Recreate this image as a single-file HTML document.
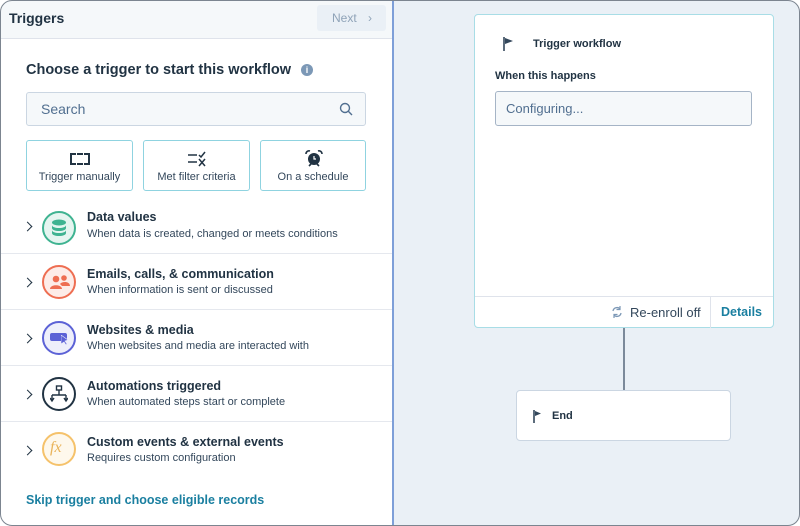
<!DOCTYPE html>
<html><head><style>
*{box-sizing:border-box;margin:0;padding:0}
body{width:800px;height:526px;background:#fff;font-family:"Liberation Sans",sans-serif;color:#33475b;position:relative;overflow:hidden}
.frame{position:absolute;left:0;top:0;width:800px;height:526px;border-radius:12px;overflow:hidden;background:#eaf0f6}
.border{position:absolute;left:0;top:0;width:800px;height:526px;border:1px solid #7c8590;border-radius:12px}
.left{position:absolute;left:0;top:0;width:394px;height:526px;background:#fff;border-right:2px solid #7e9fd8}
.hdr{position:absolute;left:0;top:0;width:392px;height:39px;background:#f5f8fa;border-bottom:1px solid #dfe3eb}
.abs{position:absolute}
.btn{position:absolute;top:140px;height:51px;border:1px solid #8fd3e0;border-radius:3px;font-size:11px;color:#33475b;text-align:center}
.btn span{position:absolute;left:0;right:0;top:30px}
.row{position:absolute;left:0;width:392px;height:56px;border-bottom:1px solid #e5e8ee}
.circ{position:absolute;left:42px;width:34px;height:34px;border-radius:50%;border:2px solid}
.rt{position:absolute;left:87px;font-size:12.5px;font-weight:bold;color:#213343}
.rs{position:absolute;left:87px;font-size:11px;color:#33475b}
.chev{position:absolute;left:24px;width:7px;height:7px;border-right:1.6px solid #213343;border-top:1.6px solid #213343;transform:rotate(45deg)}
</style></head><body>
<div class="frame">
<div class="left">
 <div class="hdr">
  <div class="abs" style="left:9px;top:10px;font-size:14px;font-weight:bold;color:#213343">Triggers</div>
  <div class="abs" style="left:317px;top:5px;width:69px;height:26px;background:#eaf0f6;border-radius:3px;font-size:12px;color:#8fa3b8;padding:6px 0 0 15px">Next <span style="margin-left:8px">›</span></div>
 </div>
 <div class="abs" style="left:26px;top:62px;font-size:14.5px;font-weight:bold;color:#213343">Choose a trigger to start this workflow</div>
 <div class="abs" style="left:301px;top:64px;width:12px;height:12px;border-radius:50%;background:#7c98b6;color:#fff;font-size:9px;font-weight:bold;text-align:center;line-height:12px">i</div>
 <div class="abs" style="left:26px;top:92px;width:340px;height:34px;background:#f5f8fa;border:1px solid #cbd6e2;border-radius:3px">
  <div class="abs" style="left:14px;top:8px;font-size:14px;color:#516f90">Search</div>
  <svg class="abs" style="left:312px;top:9px" width="14" height="14" viewBox="0 0 14 14"><circle cx="6" cy="6" r="4.5" fill="none" stroke="#516f90" stroke-width="1.4"/><path d="M9.3 9.3L13 13" stroke="#516f90" stroke-width="1.4"/></svg>
 </div>
 <div class="btn" style="left:26px;width:107px"><div class="abs" style="left:43px;top:12px;width:20px;height:12px;border:2px dashed #213343"></div><span>Trigger manually</span></div>
 <div class="btn" style="left:143px;width:107px"><svg class="abs" style="left:43px;top:10px" width="20" height="16" viewBox="0 0 20 16"><path d="M1 4h9M1 11h9" stroke="#213343" stroke-width="1.6"/><path d="M12 4l2 2 4-5M12 8l6 7M18 8l-6 7" stroke="#213343" stroke-width="1.5" fill="none"/></svg><span>Met filter criteria</span></div>
 <div class="btn" style="left:260px;width:106px"><svg class="abs" style="left:43px;top:9px" width="20" height="18" viewBox="0 0 20 18"><circle cx="10" cy="9" r="6" fill="#213343"/><path d="M10 6v3h2" stroke="#fff" stroke-width="1.2" fill="none"/><path d="M2 4a3 3 0 0 1 4-3M18 4a3 3 0 0 0-4-3M5 16l2-2M15 16l-2-2" stroke="#213343" stroke-width="1.6" fill="none"/></svg><span>On a schedule</span></div>

 <div class="row" style="top:198px"><div class="chev" style="top:25px"></div><div class="circ" style="top:13px;border-color:#3fb391;background:#e5f5f0"><svg class="abs" style="left:7px;top:6px" width="16" height="18" viewBox="0 0 16 18"><ellipse cx="8" cy="3.5" rx="7" ry="3" fill="#3fb391"/><path d="M1 6c0 4 14 4 14 0v3c0 4-14 4-14 0zM1 11c0 4 14 4 14 0v3c0 4-14 4-14 0z" fill="#3fb391"/></svg></div><div class="rt" style="top:12px">Data values</div><div class="rs" style="top:30px">When data is created, changed or meets conditions</div></div>
 <div class="row" style="top:254px"><div class="chev" style="top:25px"></div><div class="circ" style="top:11px;border-color:#ee6e52;background:#fdece8"><svg class="abs" style="left:6px;top:7px" width="20" height="16" viewBox="0 0 20 16"><circle cx="6" cy="5" r="3.3" fill="#ee6e52"/><circle cx="14" cy="4" r="2.8" fill="#ee6e52"/><path d="M0 15c0-5 12-5 12 0zM10 10c2-3 10-3 10 2h-8z" fill="#ee6e52"/></svg></div><div class="rt" style="top:13px">Emails, calls, &amp; communication</div><div class="rs" style="top:30px">When information is sent or discussed</div></div>
 <div class="row" style="top:310px"><div class="chev" style="top:25px"></div><div class="circ" style="top:11px;border-color:#5c62d6;background:#eeeffb"><div class="abs" style="left:6px;top:10px;width:17px;height:8px;background:#5c62d6;border-radius:2px"></div><svg class="abs" style="left:17px;top:12px" width="8" height="10" viewBox="0 0 8 10"><path d="M0 0l7 5-3 1 2 3-1 1-2-3-3 2z" fill="#5c62d6" stroke="#eeeffb" stroke-width=".6"/></svg></div><div class="rt" style="top:13px">Websites &amp; media</div><div class="rs" style="top:30px">When websites and media are interacted with</div></div>
 <div class="row" style="top:366px"><div class="chev" style="top:25px"></div><div class="circ" style="top:11px;border-color:#213343;background:#fff"><svg class="abs" style="left:6px;top:6px" width="18" height="18" viewBox="0 0 18 18"><rect x="6.5" y="1" width="5" height="4" fill="none" stroke="#213343" stroke-width="1.4"/><path d="M9 5v5M2 10h14M2 10v5M16 10v5M0 13l2 3 2-3M14 13l2 3 2-3" stroke="#213343" stroke-width="1.4" fill="none"/></svg></div><div class="rt" style="top:13px">Automations triggered</div><div class="rs" style="top:30px">When automated steps start or complete</div></div>
 <div class="row" style="top:422px;border-bottom:none"><div class="chev" style="top:25px"></div><div class="circ" style="top:10px;border-color:#f5c26b;background:#fef8ec"><div class="abs" style="left:6px;top:5px;font-family:'Liberation Serif',serif;font-style:italic;font-size:16px;color:#e9b359">fx</div></div><div class="rt" style="top:13px">Custom events &amp; external events</div><div class="rs" style="top:30px">Requires custom configuration</div></div>
 <div class="abs" style="left:26px;top:493px;font-size:12.5px;font-weight:bold;color:#1a7fa0">Skip trigger and choose eligible records</div>
</div>

<div class="abs" style="left:474px;top:14px;width:300px;height:314px;background:#fff;border:1px solid #a8dde6;border-radius:4px">
 <svg class="abs" style="left:28px;top:22px" width="12" height="14" viewBox="0 0 12 14"><path d="M1 0v14" stroke="#33475b" stroke-width="1.6"/><path d="M2 1l8 3-8 3z" fill="#33475b"/></svg>
 <div class="abs" style="left:58px;top:23px;font-size:11px;font-weight:bold;color:#213343">Trigger workflow</div>
 <div class="abs" style="left:20px;top:55px;font-size:11px;font-weight:bold;color:#213343">When this happens</div>
 <div class="abs" style="left:20px;top:76px;width:257px;height:35px;background:#f5f8fa;border:1px solid #a5b4c6;border-radius:3px;font-size:13px;color:#516f90;padding:9px 0 0 10px">Configuring...</div>
 <div class="abs" style="left:0;top:281px;width:298px;height:1px;background:#dfe3eb"></div>
 <div class="abs" style="left:235px;top:282px;width:1px;height:31px;background:#dfe3eb"></div>
 <svg class="abs" style="left:136px;top:291px" width="12" height="12" viewBox="0 0 12 12"><path d="M2 5a4 4 0 0 1 7-2M10 7a4 4 0 0 1-7 2" stroke="#7c98b6" stroke-width="1.3" fill="none"/><path d="M9 0v3.5H5.5M3 12V8.5h3.5" stroke="#7c98b6" stroke-width="1.2" fill="none"/></svg>
 <div class="abs" style="left:155px;top:290px;font-size:13px;color:#33475b">Re-enroll off</div>
 <div class="abs" style="left:246px;top:290px;font-size:12.5px;font-weight:bold;color:#1a7fa0">Details</div>
</div>
<div class="abs" style="left:623px;top:328px;width:2px;height:62px;background:#7c8a9a"></div>
<div class="abs" style="left:516px;top:390px;width:215px;height:51px;background:#fff;border:1px solid #cbd6e2;border-radius:4px">
 <svg class="abs" style="left:16px;top:19px" width="10" height="13" viewBox="0 0 10 13"><path d="M1 0v13" stroke="#33475b" stroke-width="1.6"/><path d="M2 1l6 2.5-6 2.5z" fill="#33475b"/></svg>
 <div class="abs" style="left:35px;top:19px;font-size:11px;font-weight:bold;color:#213343">End</div>
</div>
</div>
<div class="border"></div>
</body></html>
